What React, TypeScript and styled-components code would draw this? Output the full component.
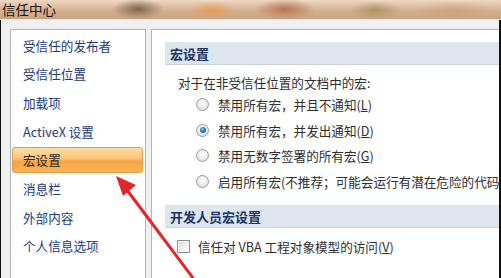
import React from "react";
import styled, { createGlobalStyle } from "styled-components";

// Global
const GlobalStyle = createGlobalStyle`
  *, *::before, *::after {
    box-sizing: border-box;
  }
  html, body {
    margin: 0;
    padding: 0;
    background: #f0f0f0;
  }
  body {
    font-family: "Noto Sans CJK SC", "Liberation Sans", sans-serif;
  }
`;

// Styled Components
const Window = styled.div`
  position: relative;
  width: 501px;
  height: 278px;
  overflow: hidden;
  display: flex;
  flex-direction: column;
  background: #f0f0f0;
`;

const TitleBar = styled.div`
  height: 20px;
  flex: none;
  display: flex;
  align-items: center;
  padding: 0 0 1px 2px;
  font-size: 13.5px;
  color: #161616;
  border-bottom: 1px solid #e9e2da;
  background:
    radial-gradient(ellipse 26px 10px at 138px 9px, rgba(96, 78, 48, 0.75), transparent),
    radial-gradient(ellipse 24px 9px at 212px 10px, rgba(236, 150, 70, 0.7), transparent),
    radial-gradient(ellipse 30px 10px at 285px 9px, rgba(170, 90, 60, 0.7), transparent),
    radial-gradient(ellipse 26px 9px at 375px 10px, rgba(150, 130, 70, 0.6), transparent),
    radial-gradient(ellipse 40px 9px at 455px 10px, rgba(200, 150, 110, 0.5), transparent),
    linear-gradient(to bottom, #eed7c2 0%, #d6b190 55%, #c9a381 100%);
`;

const Body = styled.div`
  flex: 1;
  display: flex;
  gap: 5px;
  padding: 9px 0 0 9px;
  border-left: 1px solid #111;
  border-right: 2px solid #111;
  overflow: hidden;
`;

const NavPanel = styled.div`
  width: 136px;
  height: 300px;
  flex: none;
  background: #fff;
  border: 1px solid #b4b4b4;
  padding: 2px 2px 0 1px;
  display: flex;
  flex-direction: column;
  gap: 2.7px;
`;

const NavItem = styled.div<{ $active?: boolean }>`
  height: 26px;
  flex: none;
  display: flex;
  align-items: center;
  padding-left: 10px;
  font-size: 12.6px;
  color: ${(p) => (p.$active ? "#2a2a2a" : "#21387a")};
  border-radius: 3px;
  border: 1px solid ${(p) => (p.$active ? "#e29b48" : "transparent")};
  background: ${(p) =>
    p.$active
      ? "linear-gradient(to bottom, #fde0a8 0%, #fbc275 45%, #f7a443 55%, #f9b457 100%)"
      : "transparent"};
`;

const ContentPanel = styled.div`
  flex: 1;
  height: 300px;
  background: #fff;
  border: 1px solid #b4b4b4;
  border-right: none;
  padding: 12px 0 0 13px;
  display: flex;
  flex-direction: column;
`;

const SectionHeader = styled.div<{ $top?: number }>`
  height: 23px;
  flex: none;
  margin-top: ${(p) => p.$top ?? 0}px;
  display: flex;
  align-items: center;
  padding-left: 5px;
  font-size: 13px;
  font-weight: bold;
  color: #1b3467;
  background: #dde6ee;
  border-bottom: 1px solid #c9d3dc;
`;

const Intro = styled.div`
  margin: 9px 0 0 13px;
  height: 18px;
  line-height: 18px;
  font-size: 12.6px;
  color: #2e2e2e;
  white-space: nowrap;
`;

const OptionList = styled.div`
  margin: 0 0 0 31px;
  display: flex;
  flex-direction: column;
`;

const OptionRow = styled.div`
  height: 25.5px;
  display: flex;
  align-items: center;
  gap: 9px;
  font-size: 12.6px;
  color: #2e2e2e;
  white-space: nowrap;
`;

const Radio = styled.span<{ $checked?: boolean }>`
  width: 13px;
  height: 13px;
  flex: none;
  border-radius: 50%;
  border: 1px solid #9a9a9a;
  background: radial-gradient(circle at 50% 40%, #ffffff 0%, #eaeaea 55%, #cfcfcf 100%);
  display: flex;
  align-items: center;
  justify-content: center;
  &::after {
    content: "";
    display: ${(p) => (p.$checked ? "block" : "none")};
    width: 6px;
    height: 6px;
    border-radius: 50%;
    background: radial-gradient(circle at 40% 35%, #7fd0ff 0%, #1f7ec2 45%, #0c3f63 100%);
  }
`;

const Key = styled.span`
  text-decoration: underline;
`;

const CheckRow = styled.div`
  margin: 9px 0 0 12px;
  height: 18px;
  display: flex;
  align-items: center;
  gap: 8px;
  font-size: 12.6px;
  color: #2e2e2e;
  white-space: nowrap;
`;

const CheckBox = styled.span`
  width: 13px;
  height: 13px;
  flex: none;
  border: 1px solid #8f8f8f;
  background: linear-gradient(135deg, #d6d6d6 0%, #f3f3f3 60%, #ffffff 100%);
  box-shadow: inset 0 0 0 1px #f4f4f4;
`;

const ArrowLayer = styled.svg`
  position: absolute;
  left: 0;
  top: 0;
  pointer-events: none;
`;

const navItems = [
  "受信任的发布者",
  "受信任位置",
  "加载项",
  "ActiveX 设置",
  "宏设置",
  "消息栏",
  "外部内容",
  "个人信息选项",
];

const options = [
  { label: "禁用所有宏，并且不通知", key: "L" },
  { label: "禁用所有宏，并发出通知", key: "D", checked: true },
  { label: "禁用无数字签署的所有宏", key: "G" },
  { label: "启用所有宏(不推荐；可能会运行有潜在危险的代码)", key: "" },
];

const App: React.FC = () => {
  return (
    <>
      <GlobalStyle />
      <Window>
        <TitleBar>信任中心</TitleBar>
        <Body>
          <NavPanel>
            {navItems.map((item) => (
              <NavItem key={item} $active={item === "宏设置"}>
                {item}
              </NavItem>
            ))}
          </NavPanel>
          <ContentPanel>
            <SectionHeader>宏设置</SectionHeader>
            <Intro>对于在非受信任位置的文档中的宏:</Intro>
            <OptionList>
              {options.map((o) => (
                <OptionRow key={o.label}>
                  <Radio $checked={o.checked} />
                  <span>
                    {o.label}
                    {o.key && (
                      <>
                        (<Key>{o.key}</Key>)
                      </>
                    )}
                  </span>
                </OptionRow>
              ))}
            </OptionList>
            <SectionHeader $top={11}>开发人员宏设置</SectionHeader>
            <CheckRow>
              <CheckBox />
              <span>
                信任对 VBA 工程对象模型的访问(<Key>V</Key>)
              </span>
            </CheckRow>
          </ContentPanel>
        </Body>
        <ArrowLayer width="501" height="278" viewBox="0 0 501 278">
          <line x1="196" y1="282" x2="124" y2="186" stroke="#e3262c" strokeWidth="3" />
          <polygon points="116,176 136,185 123,196" fill="#e3262c" />
        </ArrowLayer>
      </Window>
    </>
  );
};

export default App;
